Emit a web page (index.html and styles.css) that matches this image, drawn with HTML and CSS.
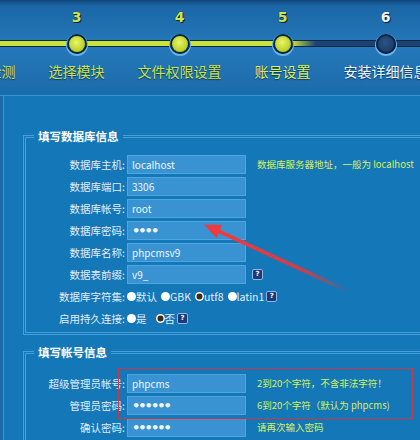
FILE: index.html
```html
<!DOCTYPE html>
<html lang="zh-CN">
<head>
   <meta charset="UTF-8">
   <title>PHPCMS 安装向导 - 账号设置</title>
   <link rel="stylesheet" href="styles.css">
</head>
<body>
<div class="page">
   <div class="head">
      <ul class="steps">
         <li class="step done"><b>2</b><i></i><span>运行环境检测</span></li>
         <li class="step done"><b>3</b><i></i><span>选择模块</span></li>
         <li class="step done"><b>4</b><i></i><span>文件权限设置</span></li>
         <li class="step done last"><b>5</b><i></i><span>账号设置</span></li>
         <li class="step now"><b>6</b><i></i><span>安装详细信息</span></li>
         <li class="step"><b>7</b><i></i><span>安装完成</span></li>
      </ul>
   </div>
   <div class="strip"></div>

   <div class="main">
      <fieldset class="box first">
         <legend>填写数据库信息</legend>
         <div class="row">
            <label>数据库主机:</label>
            <input class="txt" type="text" value="localhost">
            <em class="tip">数据库服务器地址，一般为 localhost</em>
         </div>
         <div class="row">
            <label>数据库端口:</label>
            <input class="txt" type="text" value="3306">
         </div>
         <div class="row">
            <label>数据库帐号:</label>
            <input class="txt" type="text" value="root">
         </div>
         <div class="row">
            <label>数据库密码:</label>
            <input class="txt" type="password" value="1234">
         </div>
         <div class="row">
            <label>数据库名称:</label>
            <input class="txt" type="text" value="phpcmsv9">
         </div>
         <div class="row">
            <label>数据表前缀:</label>
            <input class="txt" type="text" value="v9_">
            <span class="help">?</span>
         </div>
         <div class="row">
            <label>数据库字符集:</label>
            <span class="opt"><input type="radio" name="charset">默认</span>
            <span class="opt"><input type="radio" name="charset">GBK</span>
            <span class="opt"><input type="radio" name="charset" checked>utf8</span>
            <span class="opt tight"><input type="radio" name="charset">latin1</span>
            <span class="help">?</span>
         </div>
         <div class="row">
            <label>启用持久连接:</label>
            <span class="opt wide"><input type="radio" name="pconnect">是</span>
            <span class="opt tight"><input type="radio" name="pconnect" checked>否</span>
            <span class="help">?</span>
         </div>
      </fieldset>

      <fieldset class="box second">
         <legend>填写帐号信息</legend>
         <div class="row">
            <label>超级管理员帐号:</label>
            <input class="txt" type="text" value="phpcms">
            <em class="tip">2到20个字符，不含非法字符！</em>
         </div>
         <div class="row">
            <label>管理员密码:</label>
            <input class="txt" type="password" value="phpcms">
            <em class="tip">6到20个字符（默认为 phpcms)</em>
         </div>
         <div class="row">
            <label>确认密码:</label>
            <input class="txt" type="password" value="phpcms">
            <em class="tip">请再次输入密码</em>
         </div>
      </fieldset>
   </div>

   <!-- пометки поверх скриншота -->
   <div class="mark"></div>
   <svg class="arrow" width="420" height="440" viewBox="0 0 420 440">
      <defs>
         <linearGradient id="fade" x1="350" y1="292" x2="214" y2="229" gradientUnits="userSpaceOnUse">
            <stop offset="0" stop-color="#e8363a" stop-opacity="0"/>
            <stop offset="0.35" stop-color="#e8363a" stop-opacity="0.85"/>
            <stop offset="1" stop-color="#f03a3c"/>
         </linearGradient>
      </defs>
      <line x1="350" y1="292" x2="215" y2="229.5" stroke="url(#fade)" stroke-width="4" stroke-linecap="round"/>
      <polygon points="204,224.5 222,225 216.5,238" fill="#f03a3c"/>
   </svg>
</div>
</body>
</html>
```

FILE: styles.css
```css
html,
body {
   margin: 0;
   padding: 0;
   overflow: hidden;
}

body {
   font: 10.5px "Noto Sans CJK SC", "Noto Sans", sans-serif;
   background-color: #1a6aa7;
   color: #e2edf7;
}

.page {
   position: relative;
   width: 600px;
}

/* шапка с шагами */
.head {
   height: 87px;
   overflow: hidden;
   background: linear-gradient(#12477d 0, #1b66a6 6px, #2479ba 45px, #1e6dac 87px);
}

.steps {
   display: flex;
   margin: 0 0 0 -78px;
   padding: 0;
   list-style: none;
   height: 87px;
   background:
      linear-gradient(to right, #cbe238 0, #cbe238 370px, #1c4274 394px, #1c4274 100%) no-repeat 0 41px / 100% 5px,
      linear-gradient(#0d2746, #0d2746) no-repeat 0 40px / 100% 7px;
}

.step {
   display: flex;
   flex-direction: column;
   align-items: center;
   flex: none;
   width: 103px;
}

.step b {
   margin-top: 10px;
   height: 15px;
   font: bold 14px/15px "DejaVu Sans", sans-serif;
   color: #f2f6fa;
   text-shadow: 0 0 1px #0a2240, 1px 1px 0 #0a2240;
}

.step i {
   box-sizing: border-box;
   width: 20px;
   height: 20px;
   margin-top: 9px;
   border: 2px solid #0c2544;
   border-radius: 50%;
   background: radial-gradient(circle at 45% 40%, #2a5488, #17345f);
   box-shadow: 0 1px 0 1px #6bb4e8;
}

.step span {
   margin-top: 9px;
   font-size: 14px;
   line-height: 16px;
   white-space: nowrap;
   color: #f4f8fc;
   text-shadow: 0 1px 1px #0b3560;
}

.done b {
   color: #cfe64a;
}

.done i {
   background: radial-gradient(circle at 45% 40%, #e8f56a, #b5cf22 70%);
}

.done span {
   color: #c9e24a;
}

.last span {
   color: #dcf158;
}

.strip {
   height: 8px;
   border-bottom: 1px solid #3a93cf;
   background-color: #1a6eab;
}

/* основная часть */
.main {
   margin-left: 3px;
   padding: 32px 0 20px;
   border-left: 1px solid #3a93cf;
   background-color: #1477b8;
}

.box {
   margin: 0 0 0 19px;
   padding: 9px 0 3px 8px;
   border: 3px double #469fd8;
   border-right: 0;
}

.second {
   margin-top: 9px;
   padding-top: 12px;
}

.box legend {
   padding: 0 4px;
   font-size: 11.5px;
   font-weight: bold;
   line-height: 16px;
   color: #fff;
}

.row {
   display: flex;
   align-items: center;
   height: 22px;
}

.row label {
   flex: none;
   box-sizing: border-box;
   width: 93px;
   padding-right: 2px;
   text-align: right;
}

.txt {
   flex: none;
   box-sizing: border-box;
   width: 119px;
   height: 19px;
   margin: 0;
   padding: 0 4px;
   border: 1px solid #4ea6de;
   background-color: #3993d3;
   color: #f0f6fb;
   font: 10px "Noto Sans CJK SC", "Noto Sans", sans-serif;
   outline: none;
}

.txt[type="password"] {
   font: bold 13px "DejaVu Sans", sans-serif;
   letter-spacing: -2px;
}

.tip {
   margin-left: 11px;
   font-size: 9.5px;
   font-style: normal;
   color: #d8ef5c;
   white-space: nowrap;
}

.opt {
   display: flex;
   align-items: center;
   margin-right: 4px;
}

.opt.wide {
   margin-right: 9px;
}

.opt.tight {
   margin-right: 2px;
}

.opt input {
   appearance: none;
   box-sizing: border-box;
   width: 9px;
   height: 9px;
   margin: 0;
   border-radius: 50%;
   background-color: #fff;
}

.opt input:checked {
   background-color: #3a2a1e;
   box-shadow: inset 0 0 0 1.5px #fff;
}

.help {
   display: inline-flex;
   align-items: center;
   justify-content: center;
   width: 9px;
   height: 9px;
   margin-left: 6px;
   border: 1px solid #8fb8e0;
   border-radius: 2px;
   background-color: #1c3a78;
   color: #fff;
   font: bold 7px/1 "DejaVu Sans", sans-serif;
}

.opt + .help {
   margin-left: 0;
}

.mark {
   position: absolute;
   left: 118px;
   top: 368px;
   width: 293px;
   height: 49px;
   border: 1px solid #c83848;
}

.arrow {
   position: absolute;
   left: 0;
   top: 0;
   pointer-events: none;
}
```
